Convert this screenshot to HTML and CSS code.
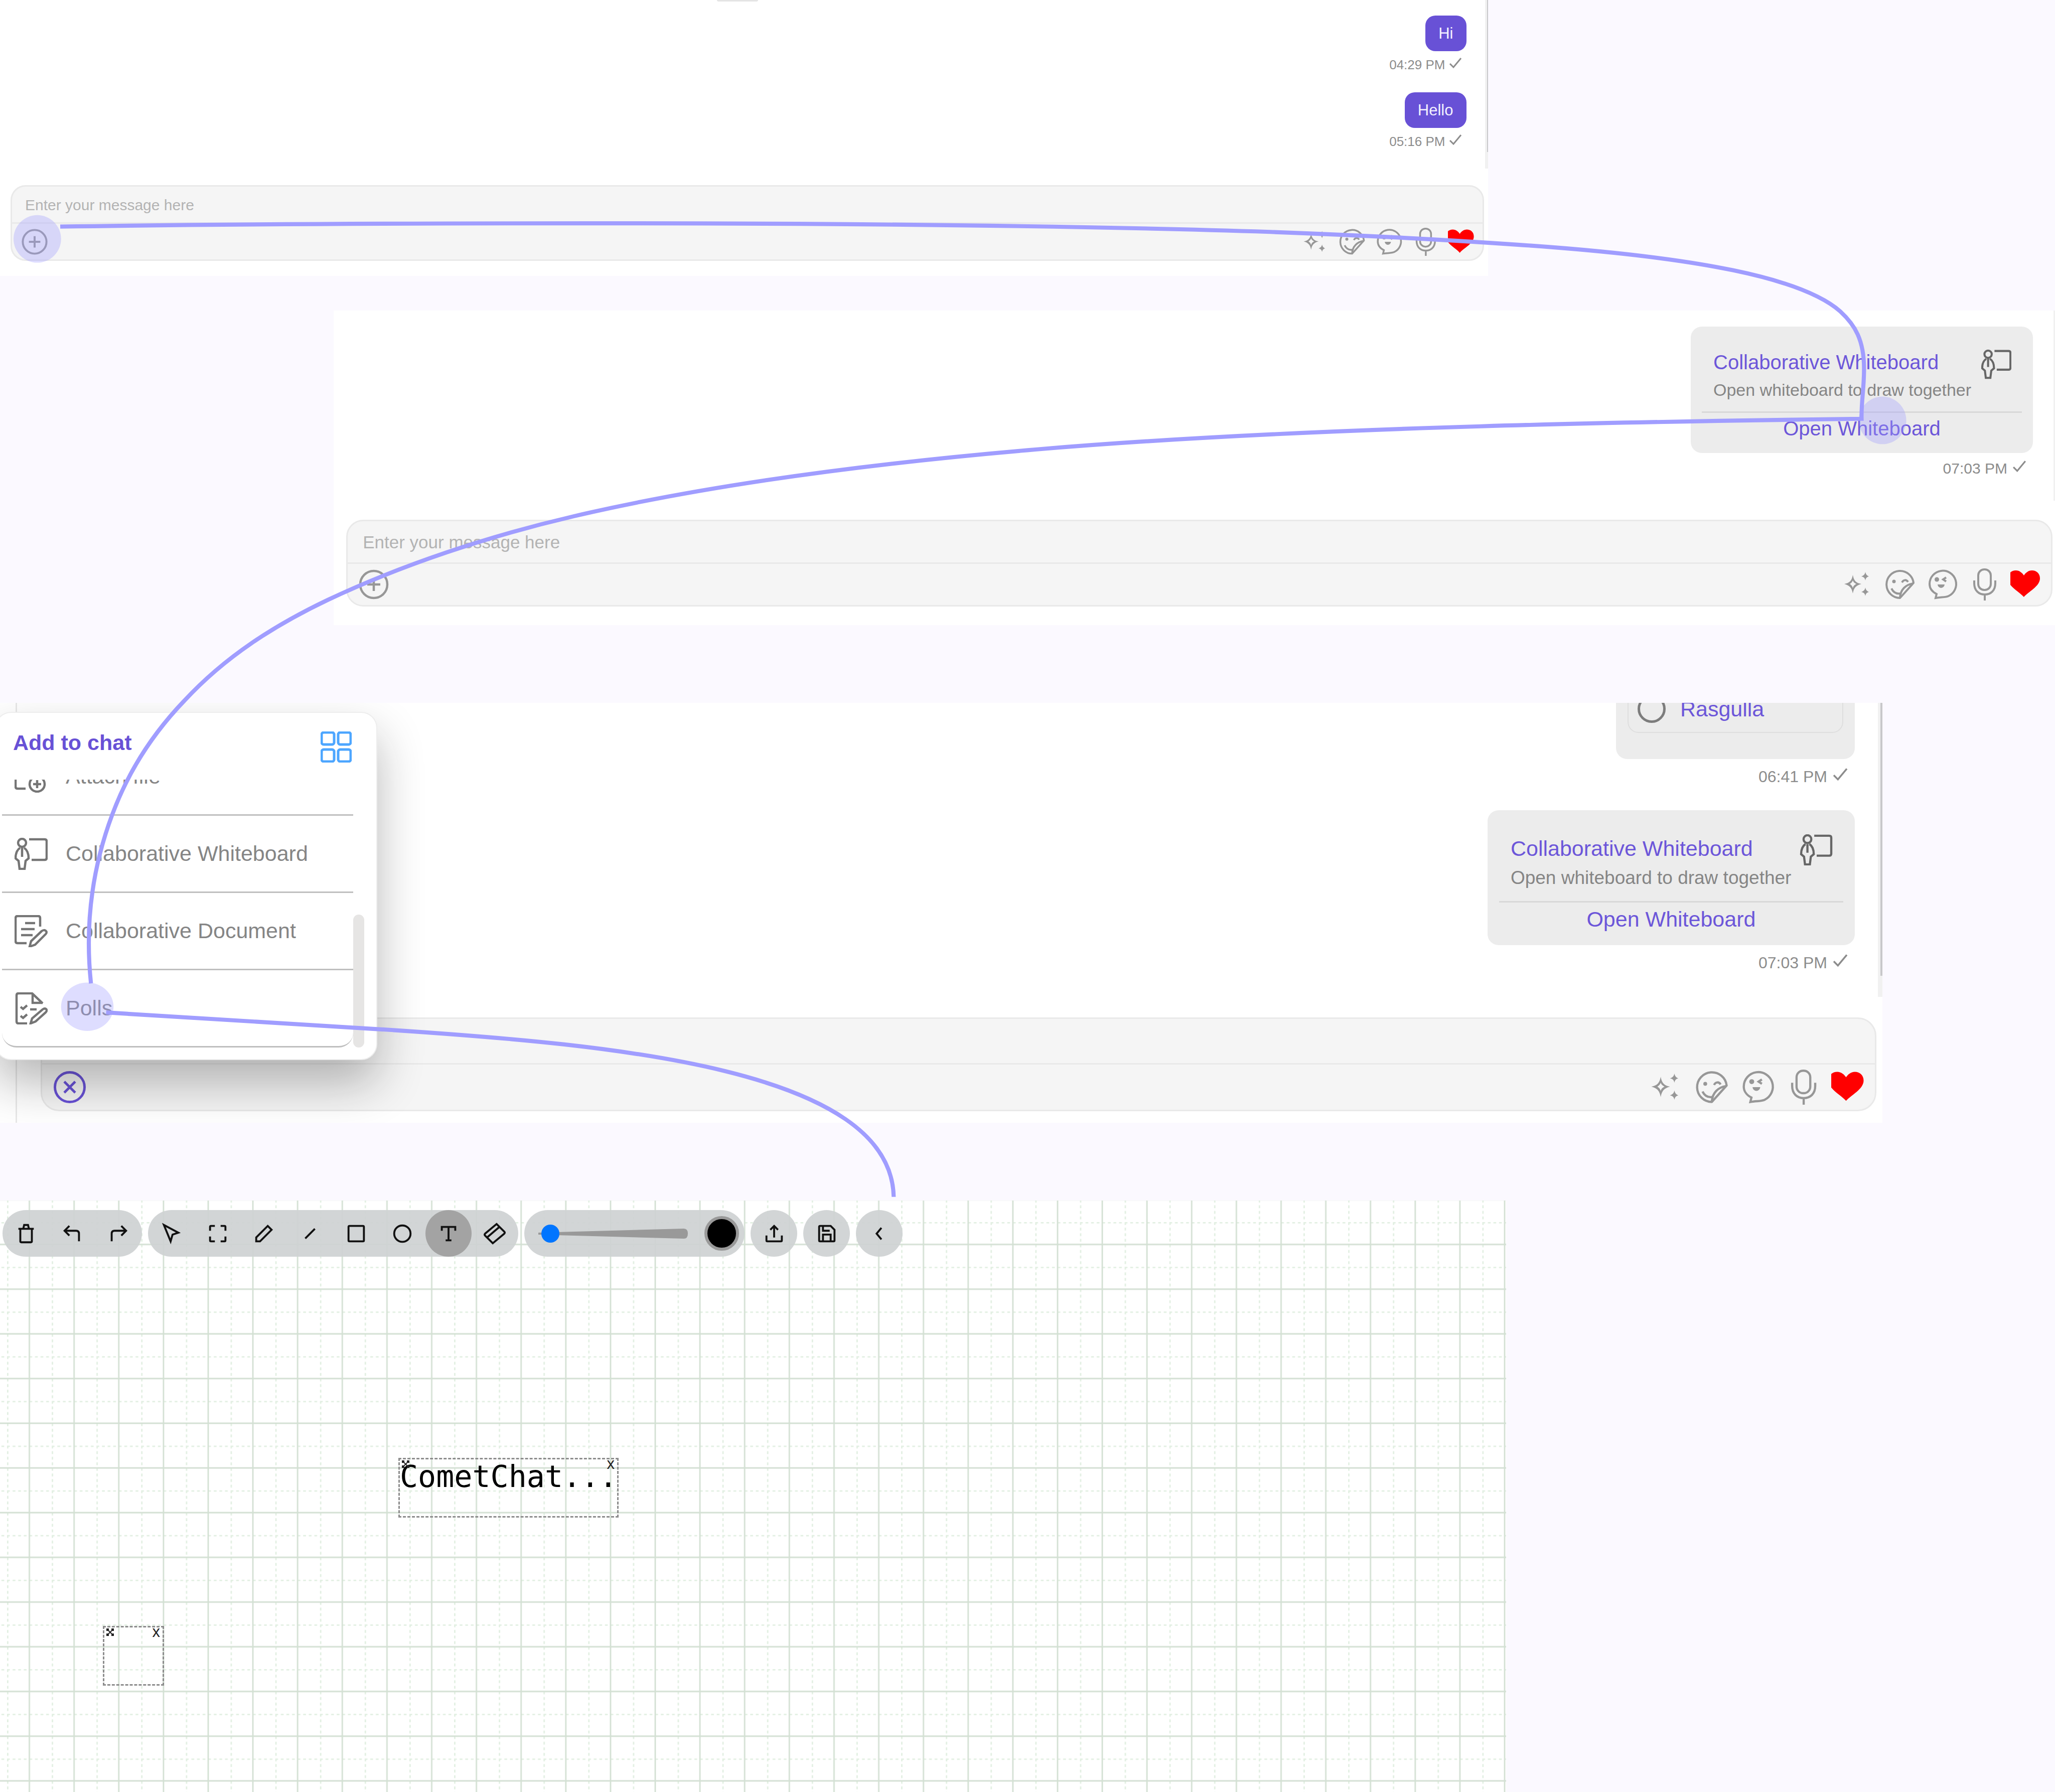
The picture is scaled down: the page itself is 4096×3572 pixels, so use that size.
FILE: index.html
```html
<!DOCTYPE html>
<html lang="en">
<head>
<meta charset="utf-8">
<title>CometChat extensions</title>
<link rel="stylesheet" href="styles.css">
</head>
<body>
<svg class="sprite" aria-hidden="true">
  <symbol id="check" viewBox="0 0 26 22"><path d="M2 13l7 7L24 2" fill="none" stroke="currentColor" stroke-width="3"/></symbol>
  <symbol id="plus" viewBox="0 0 64 64"><g fill="none" stroke="currentColor" stroke-width="4.500"><circle cx="32" cy="32" r="27"/><path d="M32 19v26M19 32h26"/></g></symbol>
  <symbol id="close" viewBox="0 0 64 64"><g fill="none" stroke="currentColor" stroke-width="4.500"><circle cx="32" cy="32" r="27"/><path d="M22 22l20 20M42 22L22 42"/></g></symbol>
  <symbol id="sparkles" viewBox="0 0 64 64"><path fill="currentColor" fill-rule="evenodd" d="M22 13c2 11 6 16 17 18-11 3-15 8-17 19-2-11-6-16-17-19 11-2 15-7 17-18zm0 11c-1 3-3 5-6 7 3 2 5 4 6 8 1-4 3-6 7-8-4-2-6-4-7-7zM47 7c1 5 3 7 7 9-4 1-6 3-7 8-1-5-3-7-8-8 5-2 7-4 8-9zM47 38c1 5 3 7 7 9-4 1-6 3-7 8-1-5-3-7-8-8 5-2 7-4 8-9z"/></symbol>
  <symbol id="sticker" viewBox="0 0 64 64"><g fill="none" stroke="currentColor" stroke-width="4" stroke-linejoin="round"><path d="M59 29A27 27 0 1 0 32 59z"/><path d="M58 30C44 32 33 42 32 58M15 40c4 8 10 11 17 10M36 28c3-6 9-6 12-1"/></g><circle cx="20" cy="26" r="3.500" fill="currentColor"/></symbol>
  <symbol id="smile" viewBox="0 0 64 64"><g fill="none" stroke="currentColor" stroke-width="4"><path d="M19 59l2-8C11 46 7 38 7 31A26.500 26.500 0 1 1 45 55c-6 3-15 2-26 4z"/><path d="M40 18l-6 4 6 4"/></g><circle cx="21.500" cy="22" r="4.500" fill="currentColor"/><path d="M23 32h14c-1 9-13 9-14 0z" fill="currentColor"/></symbol>
  <symbol id="mic" viewBox="0 0 64 64"><g fill="none" stroke="currentColor" stroke-width="4"><rect x="20" y="2" width="25" height="41" rx="12"/><path d="M12 24v6c0 14 9 22 21 22s21-8 21-22v-6M33 52v12"/></g></symbol>
  <symbol id="heart" viewBox="0 0 64 64"><path fill="#f00" d="M27 57C19 47-5 36-5 20-5 10 2 4 11 4c7 0 13 5 16 10C30 9 36 4 43 4c9 0 16 6 16 16 0 16-24 27-32 37z"/></symbol>
  <symbol id="presenter" viewBox="0 0 66 64"><g fill="none" stroke="currentColor" stroke-width="4.500"><circle cx="15" cy="10" r="8"/><path d="M11 20C5 24 2 32 2 41l6 5 2 16h10l2-16 6-5c0-9-3-17-9-21M15 20v18M29 3h31q4 0 4 4v33q0 4-4 4H34"/></g></symbol>
  <symbol id="document" viewBox="0 0 66 64"><g fill="none" stroke="currentColor" stroke-width="4.500"><path d="M51 23V6q0-4-4-4H6Q2 2 2 6v46q0 4 4 4h18M21 16h20M13 28h27M13 40h23M30 63l3-11 21-20c6-5 13 1 8 6L41 59z"/></g></symbol>
  <symbol id="poll" viewBox="0 0 66 64"><g fill="none" stroke="currentColor" stroke-width="4.500"><path d="M25 62H8q-4 0-4-4V6q0-4 4-4h27l21 20M36 2v19h20M12 29l5 4 8-7M12 47l5 4 8-7M31 34h13M32 62l3-10 21-18c6-4 11 1 6 6L42 58z"/></g></symbol>
  <symbol id="attach" viewBox="0 0 66 64"><g fill="none" stroke="currentColor" stroke-width="4.500"><path d="M51 23V6q0-4-4-4H6Q2 2 2 6v46q0 4 4 4h16"/><circle cx="45" cy="47" r="15"/><path d="M45 39v16M37 47h16"/></g></symbol>
  <symbol id="grid" viewBox="0 0 62 62"><g fill="none" stroke="currentColor" stroke-width="5"><rect x="2" y="2" width="25" height="24" rx="4"/><rect x="35" y="2" width="25" height="24" rx="4"/><rect x="2" y="36" width="25" height="24" rx="4"/><rect x="35" y="36" width="25" height="24" rx="4"/></g></symbol>
  <symbol id="move" viewBox="0 0 15 15"><path d="M2 2l11 11M13 2L2 13" stroke="currentColor" stroke-width="2"/><path fill="currentColor" d="M0 0h5v3L3 5H0zM10 0h5v5h-3l-2-2zM0 10h3l2 2v3H0zM12 10h3v5h-5v-3z"/></symbol>
</svg>

<main class="stage">
  <section class="panel panel-hello">
    <div class="chat">
      <div class="messages">
        <span class="date-chip"></span>
        <div class="message"><div class="bubble">Hi</div><div class="meta"><time>04:29 PM</time><svg class="check"><use href="#check"/></svg></div></div>
        <div class="message"><div class="bubble">Hello</div><div class="meta"><time>05:16 PM</time><svg class="check"><use href="#check"/></svg></div></div>
      </div>
      <div class="scroll"><div class="scroll-thumb"></div></div>
    </div>
    <form class="composer">
      <input class="entry" type="text" placeholder="Enter your message here" aria-label="Message">
      <div class="tools">
        <button type="button" class="tool tool-add" aria-label="Add"><svg><use href="#plus"/></svg></button>
        <button type="button" class="tool" aria-label="Assist"><svg><use href="#sparkles"/></svg></button>
        <button type="button" class="tool" aria-label="Stickers"><svg><use href="#sticker"/></svg></button>
        <button type="button" class="tool" aria-label="Emoji"><svg><use href="#smile"/></svg></button>
        <button type="button" class="tool" aria-label="Record"><svg><use href="#mic"/></svg></button>
        <button type="button" class="tool" aria-label="React"><svg><use href="#heart"/></svg></button>
      </div>
    </form>
  </section>

  <section class="panel panel-board">
    <div class="chat">
      <div class="messages">
        <div class="message">
          <div class="card">
            <div class="card-head">
              <div class="card-text"><div class="card-title">Collaborative Whiteboard</div><div class="card-sub">Open whiteboard to draw together</div></div>
              <svg class="card-icon"><use href="#presenter"/></svg>
            </div>
            <a class="card-link" href="#board">Open Whiteboard</a>
          </div>
          <div class="meta"><time>07:03 PM</time><svg class="check"><use href="#check"/></svg></div>
        </div>
      </div>
      <div class="scroll"></div>
    </div>
    <form class="composer">
      <input class="entry" type="text" placeholder="Enter your message here" aria-label="Message">
      <div class="tools">
        <button type="button" class="tool tool-add" aria-label="Add"><svg><use href="#plus"/></svg></button>
        <button type="button" class="tool" aria-label="Assist"><svg><use href="#sparkles"/></svg></button>
        <button type="button" class="tool" aria-label="Stickers"><svg><use href="#sticker"/></svg></button>
        <button type="button" class="tool" aria-label="Emoji"><svg><use href="#smile"/></svg></button>
        <button type="button" class="tool" aria-label="Record"><svg><use href="#mic"/></svg></button>
        <button type="button" class="tool" aria-label="React"><svg><use href="#heart"/></svg></button>
      </div>
    </form>
  </section>

  <section class="panel panel-menu">
    <div class="conversation">
      <div class="chat">
        <div class="messages">
          <div class="message">
            <div class="poll-card"><label class="option"><input type="radio" name="sweet">Rasgulla</label></div>
            <div class="meta"><time>06:41 PM</time><svg class="check"><use href="#check"/></svg></div>
          </div>
          <div class="message">
            <div class="card">
              <div class="card-head">
                <div class="card-text"><div class="card-title">Collaborative Whiteboard</div><div class="card-sub">Open whiteboard to draw together</div></div>
                <svg class="card-icon"><use href="#presenter"/></svg>
              </div>
              <a class="card-link" href="#board">Open Whiteboard</a>
            </div>
            <div class="meta"><time>07:03 PM</time><svg class="check"><use href="#check"/></svg></div>
          </div>
        </div>
        <div class="scroll"><div class="scroll-thumb"></div></div>
      </div>
      <form class="composer">
        <input class="entry" type="text" aria-label="Message">
        <div class="tools">
          <button type="button" class="tool tool-add tool-close" aria-label="Close menu"><svg><use href="#close"/></svg></button>
          <button type="button" class="tool" aria-label="Assist"><svg><use href="#sparkles"/></svg></button>
          <button type="button" class="tool" aria-label="Stickers"><svg><use href="#sticker"/></svg></button>
          <button type="button" class="tool" aria-label="Emoji"><svg><use href="#smile"/></svg></button>
          <button type="button" class="tool" aria-label="Record"><svg><use href="#mic"/></svg></button>
          <button type="button" class="tool" aria-label="React"><svg><use href="#heart"/></svg></button>
        </div>
      </form>
    </div>
    <div class="menu">
      <div class="menu-head"><h2>Add to chat</h2><button type="button" aria-label="Grid view"><svg><use href="#grid"/></svg></button></div>
      <div class="menu-body">
        <div class="menu-list">
          <button type="button" class="menu-item"><svg><use href="#attach"/></svg>Attach file</button>
          <button type="button" class="menu-item"><svg><use href="#presenter"/></svg>Collaborative Whiteboard</button>
          <button type="button" class="menu-item"><svg><use href="#document"/></svg>Collaborative Document</button>
          <button type="button" class="menu-item"><svg><use href="#poll"/></svg>Polls</button>
        </div>
        <div class="menu-thumb"></div>
      </div>
    </div>
  </section>

  <section class="panel panel-canvas" id="board">
    <svg class="paper" aria-hidden="true">
      <defs>
        <pattern id="ruled" width="320" height="320" patternUnits="userSpaceOnUse" patternTransform="translate(14 43) scale(.27845)">
          <path d="M0 5H320M5 0V320" stroke="#e2efe2" stroke-width="10" stroke-dasharray="20 20"/>
          <path d="M0 160H320M160 0V320" stroke="#d3e0d3" stroke-width="10"/>
        </pattern>
      </defs>
      <rect width="100%" height="100%" fill="url(#ruled)"/>
    </svg>
    <div class="toolbar">
      <div class="pill">
        <button type="button" aria-label="Clear"><svg viewBox="0 0 24 24"><path d="M4 7h16M9 7l1-4h4l1 4M6 7v13q0 1 1 1h10q1 0 1-1V7"/></svg></button>
        <button type="button" aria-label="Undo"><svg viewBox="0 0 24 24"><path d="M9 14L4 9l5-5M19 20v-8q0-3-3-3H4"/></svg></button>
        <button type="button" aria-label="Redo"><svg viewBox="0 0 24 24"><path d="M15 14l5-5-5-5M5 20v-8q0-3 3-3h12"/></svg></button>
      </div>
      <div class="pill">
        <button type="button" aria-label="Select"><svg viewBox="0 0 24 24"><path d="M4 3l15 8-6 2-2 7z"/></svg></button>
        <button type="button" aria-label="Area"><svg viewBox="0 0 24 24"><path d="M4 9V5q0-1 1-1h4M15 4h4q1 0 1 1v4M20 15v4q0 1-1 1h-4M9 20H5q-1 0-1-1v-4"/></svg></button>
        <button type="button" aria-label="Pen"><svg viewBox="0 0 24 24"><path d="M4 20h4L20 8l-4-4L4 16z"/></svg></button>
        <button type="button" aria-label="Line"><svg viewBox="0 0 24 24"><path d="M7 17L17 7"/></svg></button>
        <button type="button" aria-label="Rectangle"><svg viewBox="0 0 24 24"><rect x="4" y="4" width="16" height="16" rx="1"/></svg></button>
        <button type="button" aria-label="Ellipse"><svg viewBox="0 0 24 24"><circle cx="12" cy="12" r="8.500"/></svg></button>
        <button type="button" class="active" aria-label="Text"><svg viewBox="0 0 24 24"><path d="M5 9V5h14v4M12 5v14M9 19h6"/></svg></button>
        <button type="button" aria-label="Eraser"><svg viewBox="0 0 24 24"><path d="M14 2l8 8q1 1 0 2L10 22l-8-8q-1-1 0-2zM17 5L4 16"/></svg></button>
      </div>
      <div class="pill pill-brush">
        <div class="thickness">
          <svg viewBox="0 0 300 20" aria-hidden="true"><path d="M2 8L292 0q8 0 8 10t-8 10L2 12z"/></svg>
          <input type="range" min="0" max="100" value="3" aria-label="Thickness">
        </div>
        <button type="button" class="swatch" aria-label="Colour"></button>
      </div>
      <div class="pill pill-single"><button type="button" aria-label="Upload"><svg viewBox="0 0 24 24"><path d="M12 16V4M8 8l4-4 4 4M4 14v5q0 1 1 1h14q1 0 1-1v-5"/></svg></button></div>
      <div class="pill pill-single"><button type="button" aria-label="Save"><svg viewBox="0 0 24 24"><path d="M5 4h11l4 4v11q0 1-1 1H5q-1 0-1-1V5q0-1 1-1zM8 4v5h7M8 20v-7h8v7"/></svg></button></div>
      <div class="pill pill-single"><button type="button" aria-label="Collapse"><svg viewBox="0 0 24 24"><path d="M14 6l-5 6 5 6"/></svg></button></div>
    </div>
    <div class="note note-text">
      <input type="text" value="CometChat..." aria-label="Note text">
      <svg class="note-move"><use href="#move"/></svg><button type="button" class="note-close">x</button>
    </div>
    <div class="note note-empty">
      <svg class="note-move"><use href="#move"/></svg><button type="button" class="note-close">x</button>
    </div>
  </section>

  <svg class="flow" viewBox="0 0 5015 4374" preserveAspectRatio="xMinYMin meet" aria-hidden="true">
    <g fill="#a09dff" fill-opacity=".35">
      <circle cx="91" cy="583" r="58"/>
      <circle cx="4594" cy="1026" r="58"/>
      <ellipse cx="213" cy="2457" rx="64" ry="59"/>
    </g>
    <g fill="none" stroke="#a09dff" stroke-width="10">
      <path d="M147 553C600 546 1000 545 1440 545C2100 545 2650 551 3100 566C3400 577 3600 590 3700 597C4150 627 4400 680 4491 760C4527 793 4549 830 4549 900C4549 950 4542 980 4543 1022C4080 1028 3200 1040 2527 1097C2150 1129 1750 1178 1400 1260C1190 1309 980 1379 800 1464C670 1526 550 1602 450 1710C375 1788 314 1880 274 1988C232 2100 205 2240 222 2400"/>
      <path d="M259 2471C520 2487 740 2500 960 2514C1500 2550 2174 2610 2181 2921"/>
    </g>
  </svg>
</main>
</body>
</html>
```
FILE: styles.css
```css
* { box-sizing: border-box; }

body {
  margin: 0;
  background: #fbf9ff;
  font-family: "Liberation Sans", Arial, sans-serif;
}

button {
  margin: 0;
  padding: 0;
  border: 0;
  background: none;
  color: inherit;
  font: inherit;
}

svg { display: block; overflow: visible; }
.sprite { position: absolute; width: 0; height: 0; }

.stage {
  position: relative;
  display: flex;
  flex-direction: column;
  min-height: 100vh;
  overflow: hidden;
}

.flow {
  position: absolute;
  top: 0;
  left: 0;
  width: 100%;
  pointer-events: none;
}

.panel { position: relative; background: #fff; overflow: hidden; }

/* Each chat panel is shown at its own zoom level. */
.panel-hello {
  --icon: 56px; --icon-gap: 17px; --time: 26px; --time-line: 30px; --tick-w: 26px; --tick-h: 22px; --entry: 30px;
  width: 72.4%;
  margin-bottom: 69px;
}
.panel-board {
  --icon: 64px; --icon-gap: 20px; --time: 30px; --time-line: 34px; --tick-w: 28px; --tick-h: 24px; --entry: 35px;
  --title: 40px; --title-line: 46px; --sub: 34px; --sub-line: 40px; --card-icon: 60px;
  margin-left: 16.24%;
  margin-bottom: 155px;
}
.panel-menu {
  --icon: 70px; --icon-gap: 21px; --time: 32px; --time-line: 36px; --tick-w: 32px; --tick-h: 26px; --entry: 37px;
  --title: 43px; --title-line: 50px; --sub: 37px; --sub-line: 43px; --card-icon: 66px;
  width: 91.6%;
  margin-bottom: 155px;
  padding-left: 31px;
}
.conversation { display: flow-root; border-left: 3px solid #e8e8e8; }

.chat { display: flex; overflow: hidden; }
.messages { flex: 1; display: flex; flex-direction: column; position: relative; }
.message { display: flex; flex-direction: column; align-items: flex-end; }
.panel-hello .chat { height: 336px; }
.panel-hello .messages { gap: 40px; padding: 31px 37px 0 0; }
.panel-hello .message { gap: 12px; }
.panel-board .chat { height: 379px; }
.panel-board .messages { padding: 32px 41px 0 0; }
.panel-board .message { gap: 14px; }
.panel-menu .chat { height: 586px; }
.panel-menu .messages { justify-content: flex-end; gap: 49px; padding: 0 46px 50px 0; }
.panel-menu .message { gap: 17px; }

.date-chip {
  position: absolute;
  top: 0;
  left: 1429px;
  width: 82px;
  height: 3px;
  border-radius: 0 0 8px 8px;
  background: #e4e4e4;
}

.bubble {
  padding: 0 26px;
  border-radius: 20px;
  background: #6851d6;
  color: #f4f1ff;
  font-size: 31px;
  line-height: 71px;
}

.meta {
  display: flex;
  gap: 10px;
  padding-right: 13px;
  color: #8c8c8c;
  font-size: var(--time);
  line-height: var(--time-line);
}
.panel-hello .meta { gap: 7px; padding-right: 9px; }
.check { width: var(--tick-w); height: var(--tick-h); }

.scroll { width: 6px; background: #f1f1f1; display: flex; justify-content: flex-end; }
.scroll-thumb { width: 2px; height: 303px; background: #c8c8ca; }
.panel-board .scroll { width: 3px; }
.panel-menu .scroll { width: 9px; }
.panel-menu .scroll-thumb { width: 4px; height: 544px; }

.card { width: 682px; padding: 45px 22px 26px; border-radius: 22px; background: #ececec; }
.card-head { display: flex; justify-content: space-between; padding: 0 21px 23px 23px; border-bottom: 3px solid #d8d8d8; }
.card-text { padding-top: 3px; white-space: nowrap; width: 0; }
.card-title { color: #6c56d9; font-size: var(--title); line-height: var(--title-line); }
.card-sub { margin-top: 12px; color: #858585; font-size: var(--sub); line-height: var(--sub-line); }
.card-icon { width: var(--card-icon); height: var(--card-icon); color: #666; }
.card-link {
  display: block;
  margin-top: 8px;
  color: #6c56d9;
  font-size: var(--title);
  line-height: var(--title-line);
  text-align: center;
  text-decoration: none;
}
.panel-menu .card { width: 732px; padding: 48px 23px 27px; }
.panel-menu .card-head { padding-bottom: 25px; }
.panel-menu .card-icon { height: 62px; }

.poll-card { width: 476px; padding: 52px 23px; border-radius: 22px; background: #ececec; }
.option {
  display: flex;
  align-items: center;
  gap: 29px;
  height: 96px;
  padding-left: 18px;
  border: 2px solid #dedede;
  border-radius: 22px;
  color: #6c56d9;
  font-size: 43px;
}
.option input { appearance: none; width: 56px; height: 56px; margin: 0; border: 5px solid #7c7c7c; border-radius: 50%; }

.composer {
  display: flex;
  flex-direction: column;
  border: 3px solid #e9e9e9;
  background: #f5f5f5;
}
.entry {
  width: 100%;
  border: 0;
  border-bottom: 3px solid #e9e9e9;
  background: none;
  color: #444;
  font-family: inherit;
  font-size: var(--entry);
  outline: 0;
}
.entry::placeholder { color: #b3b3b3; }
.tools { flex: 1; display: flex; align-items: center; gap: var(--icon-gap); color: #979797; }
.tool svg { width: var(--icon); height: var(--icon); }
.tool-add { margin-right: auto; }
.tool-close { color: #6851d6; }

.panel-hello .composer { height: 151px; margin: 33px 8px 30px 21px; border-radius: 30px; }
.panel-hello .entry { height: 74px; padding: 2px 26px 0; }
.panel-hello .tools { padding: 0 13px 0 17px; }
.panel-board .composer { height: 173px; margin: 38px 5px 37px 25px; border-radius: 34px; }
.panel-board .entry { height: 85px; padding: 2px 30px 0; }
.panel-board .tools { padding: 0 17px 0 20px; }
.panel-menu .composer { height: 187px; margin: 41px 12px 23px 47px; border-radius: 37px; }
.panel-menu .entry { height: 91px; padding: 2px 33px 0; }
.panel-menu .tools { padding: 0 17px 0 20px; }

.menu {
  position: absolute;
  top: 18px;
  left: -10px;
  width: 762px;
  height: 694px;
  display: flex;
  flex-direction: column;
  border: 2px solid #ededed;
  border-radius: 32px;
  background: #fff;
  box-shadow: 0 46px 92px rgba(20, 20, 20, .3);
}
.menu-head { display: flex; justify-content: space-between; height: 133px; padding: 34px 49px 0 34px; }
.menu-head h2 { margin: 0; color: #6851d6; font-size: 43px; line-height: 50px; }
.menu-head button { height: 62px; margin-top: 3px; color: #4da6ff; }
.menu-head svg { width: 62px; height: 62px; }
.menu-body { display: flex; align-items: flex-end; height: 534px; padding-left: 12px; }
.menu-list { display: flex; flex-direction: column; justify-content: flex-end; width: 700px; height: 534px; overflow: hidden; }
.menu-item {
  display: flex;
  flex: none;
  align-items: center;
  gap: 36px;
  height: 154px;
  padding-left: 25px;
  border-bottom: 3px solid #bfbfbf;
  color: #858585;
  font-size: 43px;
}
.menu-item:last-child { border-radius: 0 0 29px 29px; }
.menu-item svg { width: 66px; height: 64px; color: #757575; }
.menu-thumb { width: 22px; height: 265px; border-radius: 11px; background: #e6e5e4; }

.panel-canvas { flex: 1; width: 73.3%; min-height: 1180px; }
.paper { position: absolute; inset: 0; width: 100%; height: 100%; }

.toolbar { position: relative; display: flex; gap: 12px; padding: 19px 5px; }
.pill { display: flex; align-items: center; height: 93px; padding: 0 1px; border-radius: 47px; background: rgba(207, 210, 211, .93); }
.pill > button { display: grid; place-items: center; width: 92px; height: 93px; border-radius: 50%; }
.pill > button svg { width: 46px; height: 46px; fill: none; stroke: #111; stroke-width: 2; }
.pill > .active { background: #a3a3a3; }
.pill-single { padding: 0; }
.pill-single > button { width: 93px; }
.pill-brush { gap: 33px; padding: 0 11px 0 26px; }
.pill > .swatch { width: 69px; height: 69px; border: 6px solid #999; background: #000; }

.thickness { display: grid; align-items: center; width: 300px; }
.thickness > * { grid-area: 1 / 1; width: 300px; }
.thickness svg { height: 20px; fill: #999; }
.thickness input { appearance: none; height: 36px; margin: 0; background: none; }
.thickness input::-webkit-slider-thumb { appearance: none; width: 36px; height: 36px; border-radius: 50%; background: #0075ff; }

.note { position: absolute; height: 119px; border: 3px dashed #8c8c8c; color: #222; }
.note-text { top: 513px; left: 794px; width: 439px; }
.note-empty { top: 848px; left: 205px; width: 122px; }
.note input {
  width: 100%;
  height: 68px;
  padding: 0;
  border: 0;
  background: none;
  color: #000;
  font-family: "DejaVu Sans Mono", monospace;
  font-size: 60px;
  outline: 0;
}
.note-move { position: absolute; top: 2px; left: 4px; width: 15px; height: 15px; }
.note-close { position: absolute; top: -5px; right: 5px; font-size: 31px; line-height: 28px; }
```
